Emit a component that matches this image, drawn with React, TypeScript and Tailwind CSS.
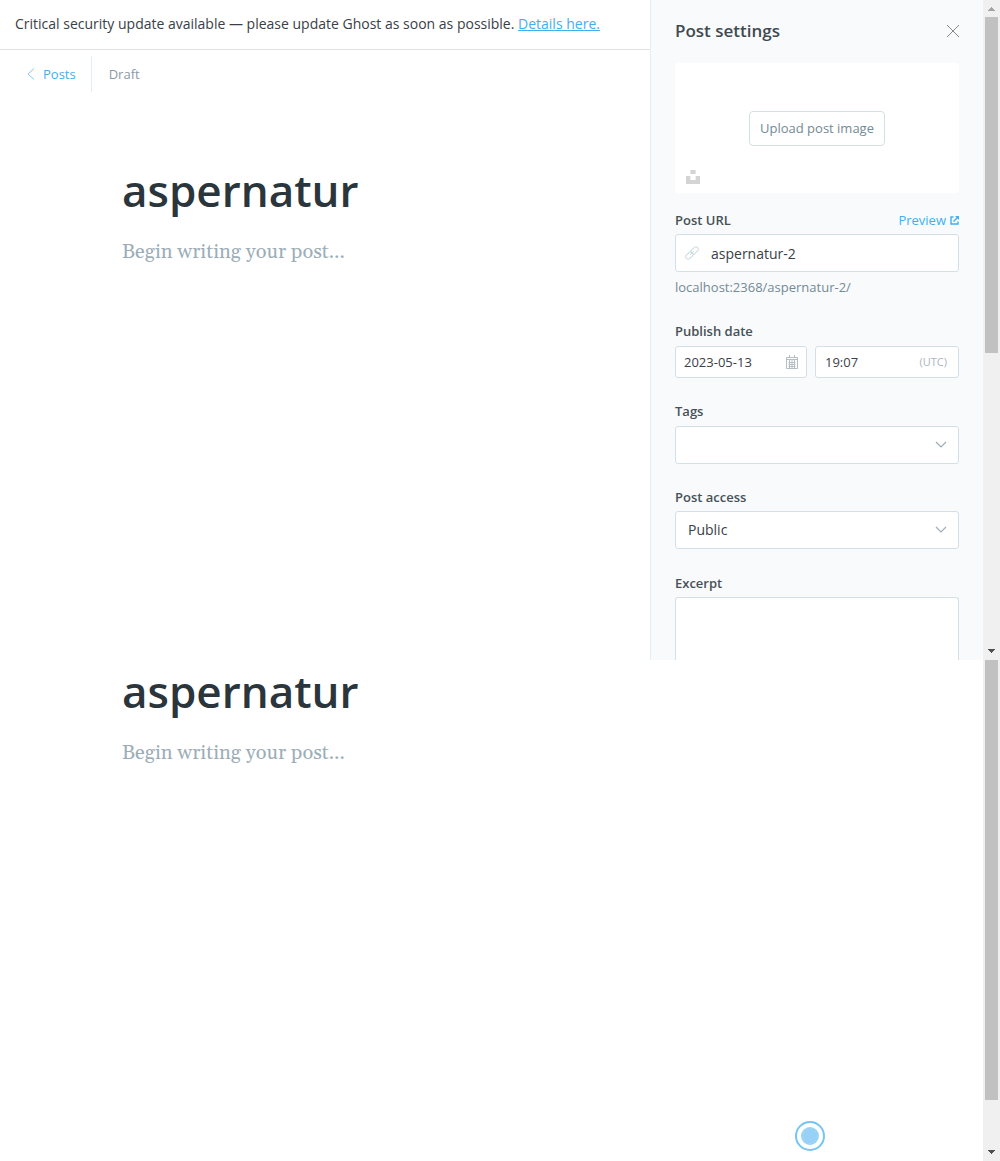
import React, { useState } from "react";

function Scrollbar({
  showTop,
  thumb,
  rest,
}: {
  showTop: boolean;
  thumb: number;
  rest: number;
}) {
  return (
    <div aria-hidden="true" className="flex w-[17px] shrink-0 flex-col bg-[#f0f0f0] px-0.5">
      {showTop && (
        <div className="flex h-[17px] items-center justify-center">
          <svg width="7" height="4" viewBox="0 0 7 4" fill="#a3a3a3" shapeRendering="crispEdges">
            <path d="M3 0h1v1h1v1h1v1h1v1H0V3h1V2h1V1h1z" />
          </svg>
        </div>
      )}
      <div className="basis-0 bg-[#c1c1c1]" style={{ flexGrow: thumb }} />
      <div className="basis-0" style={{ flexGrow: rest }} />
      <div className="flex h-[17px] items-center justify-center pb-0.5">
        <svg width="7" height="4" viewBox="0 0 7 4" fill="#505050" shapeRendering="crispEdges">
          <path d="M0 0h7v1H6v1H5v1H4v1H3V3H2V2H1V1H0z" />
        </svg>
      </div>
    </div>
  );
}

function Editor({ id }: { id: string }) {
  const [title, setTitle] = useState("aspernatur");
  return (
    <div className="flex flex-col pl-[122px] pr-8">
      <input
        id={`${id}-title`}
        aria-label="Post title"
        value={title}
        onChange={(e) => setTitle(e.target.value)}
        className="h-[62px] w-full bg-transparent text-[44px] leading-[62px] font-semibold text-[#2b363c] outline-none"
      />
      <textarea
        id={`${id}-body`}
        aria-label="Post content"
        rows={1}
        placeholder="Begin writing your post..."
        className="mt-[15px] h-8 w-full resize-none bg-transparent font-['Gelasio','Georgia','Liberation_Serif',serif] text-xl leading-8 text-[#3a464c] outline-none placeholder:text-[#9baeb8] placeholder:opacity-100"
      />
    </div>
  );
}

function Chevron() {
  return (
    <svg
      aria-hidden="true"
      width="12"
      height="8"
      viewBox="0 0 12 8"
      fill="none"
      stroke="#9baeb8"
      strokeWidth="1.2"
      className="pointer-events-none absolute top-[15px] right-3"
    >
      <path d="M1 1l5 5 5-5" />
    </svg>
  );
}

const labelClass = "block text-[13px] leading-[18px] font-semibold text-[#465157]";
const boxClass =
  "w-full rounded-[3px] border border-[#d3e0e8] bg-white text-[#394047] outline-none";

function Settings() {
  return (
    <aside className="flex w-[333px] shrink-0 flex-col border-l border-[#e3eef7] bg-[#f9fafc] px-6">
      <div className="flex h-[63px] items-center justify-between pb-0.5">
        <h4 className="text-[17px] leading-6 font-semibold text-[#3f4a50]">Post settings</h4>
        <button type="button" aria-label="Close">
          <svg width="12" height="12" viewBox="0 0 12 12" fill="none" stroke="#7f8b90">
            <path d="M0 0l12 12M12 0L0 12" />
          </svg>
        </button>
      </div>

      <div className="relative flex h-[130px] items-center justify-center rounded bg-white">
        <button
          type="button"
          className="h-[35px] w-[136px] rounded border border-[#d3e0e5] pt-0.5 text-[13px] whitespace-nowrap text-[#738a94]"
        >
          Upload post image
        </button>
        <button type="button" aria-label="Choose from Unsplash" className="absolute bottom-[9px] left-[11px]">
          <svg width="14" height="14" viewBox="0 0 14 14" fill="#d4d4d4">
            <path d="M4.4 0h5.2v4H4.4zM0 6h4.4v4h5.2V6H14v8H0z" />
          </svg>
        </button>
      </div>

      <div className="mt-[18px]">
        <div className="mb-[5px] flex items-center justify-between">
          <label htmlFor="url" className={labelClass}>
            Post URL
          </label>
          <a href="#preview" className="flex items-center gap-1 text-[13px] leading-[18px] text-[#3eb0ef]">
            Preview
            <svg width="9" height="9" viewBox="0 0 9 9" fill="none" stroke="#3eb0ef">
              <path d="M3.5 1H1v7h7V5.5" strokeWidth="1.4" />
              <path d="M3.5 5.5L7.5 1.5" strokeWidth="1.5" />
              <path d="M5 0h4v4z" fill="#3eb0ef" stroke="none" />
            </svg>
          </a>
        </div>
        <div className="relative">
          <svg
            aria-hidden="true"
            width="14"
            height="14"
            viewBox="0 0 14 14"
            fill="none"
            stroke="#ccdbe3"
            className="absolute top-3 left-[10px]"
          >
            <rect x="5.4" y="2.1" width="8.4" height="4.8" rx="2.4" transform="rotate(-45 9.6 4.5)" />
            <rect x="0.2" y="7.1" width="8.4" height="4.8" rx="2.4" transform="rotate(-45 4.4 9.5)" />
            <path d="M5 9l4-4" />
          </svg>
          <input id="url" defaultValue="aspernatur-2" className={`${boxClass} h-[38px] pl-[35px] text-sm`} />
        </div>
        <p className="mt-1.5 text-[13px] leading-[18px] text-[#738a94]">localhost:2368/aspernatur-2/</p>
      </div>

      <div className="mt-[26px]">
        <label htmlFor="date" className={`${labelClass} mb-1.5`}>
          Publish date
        </label>
        <div className="flex gap-2">
          <div className="relative w-[132px] shrink-0">
            <input id="date" defaultValue="2023-05-13" className={`${boxClass} h-8 pl-2 text-[13px]`} />
            <svg
              aria-hidden="true"
              width="12"
              height="14"
              viewBox="0 0 12 14"
              fill="none"
              stroke="#b4bec3"
              className="absolute top-[9px] right-[9px]"
            >
              <path d="M.5 2.5h11v11H.5zM.5 4.5h11M2.5 7.5h7M2.5 9.5h7M2.5 11.5h7M3.5 5v8M6 5v8M8.5 5v8M3.5 0v3M8.5 0v3" />
            </svg>
          </div>
          <div className="relative grow">
            <input aria-label="Publish time" defaultValue="19:07" className={`${boxClass} h-8 pl-[9px] text-[13px]`} />
            <span className="absolute top-2 right-3 text-[11px] leading-4 text-[#a9b7be]">(UTC)</span>
          </div>
        </div>
      </div>

      <div className="mt-6">
        <label htmlFor="tags" className={`${labelClass} mb-1.5`}>
          Tags
        </label>
        <div className="relative">
          <input id="tags" className={`${boxClass} h-[38px] px-3 text-sm`} />
          <Chevron />
        </div>
      </div>

      <div className="mt-6">
        <label htmlFor="access" className={`${labelClass} mb-[5px]`}>
          Post access
        </label>
        <div className="relative">
          <select id="access" className={`${boxClass} h-[38px] appearance-none px-3 text-sm`}>
            <option>Public</option>
          </select>
          <Chevron />
        </div>
      </div>

      <div className="mt-[25px]">
        <label htmlFor="excerpt" className={`${labelClass} mb-[5px]`}>
          Excerpt
        </label>
        <textarea
          id="excerpt"
          className="block h-[63px] w-full resize-none rounded-t-[3px] border border-b-0 border-[#d3e0e8] bg-white px-3 text-sm outline-none"
        />
      </div>
    </aside>
  );
}

export default function App() {
  return (
    <div className="flex min-h-screen flex-col bg-white font-['Segoe_UI','Open_Sans',sans-serif] text-[#394047]">
      <section className="flex">
        <main className="min-w-0 grow">
          <div className="flex h-[50px] items-center border-b border-[#dfe1e3] px-[15px] pb-px text-sm leading-5 whitespace-nowrap">
            <p>
              Critical security update available — please update Ghost as soon as possible.{" "}
              <a href="#details" className="text-[#3eb0ef] underline">
                Details here.
              </a>
            </p>
          </div>
          <header className="flex h-12 items-center pl-[27px] text-[13px] leading-5">
            <a href="#posts" className="flex h-9 items-center gap-2 border-r border-[#e3eef7] pr-[15px] text-[#3eb0ef]">
              <svg width="8" height="12" viewBox="0 0 8 12" fill="none" stroke="#7ccaf4">
                <path d="M7 .5L1 6l6 5.5" />
              </svg>
              Posts
            </a>
            <span className="pl-[17px] text-[#8a9ba4]">Draft</span>
          </header>
          <div className="pt-[61px]">
            <Editor id="first" />
          </div>
        </main>
        <Settings />
        <Scrollbar showTop thumb={336} rest={290} />
      </section>

      <section className="flex grow">
        <main className="relative min-w-0 grow">
          <Editor id="second" />
          <svg
            aria-hidden="true"
            width="30"
            height="30"
            viewBox="0 0 30 30"
            className="absolute right-[158px] bottom-[10px]"
          >
            <circle cx="15" cy="15" r="14" fill="#fff" stroke="#74c5f3" strokeWidth="2" />
            <circle cx="15" cy="15" r="9" fill="#97d2f6" />
            <circle cx="15" cy="15" r="7.5" fill="none" stroke="#a6d9f8" strokeDasharray="3 2" />
          </svg>
        </main>
        <Scrollbar showTop={false} thumb={440} rest={44} />
      </section>
    </div>
  );
}
